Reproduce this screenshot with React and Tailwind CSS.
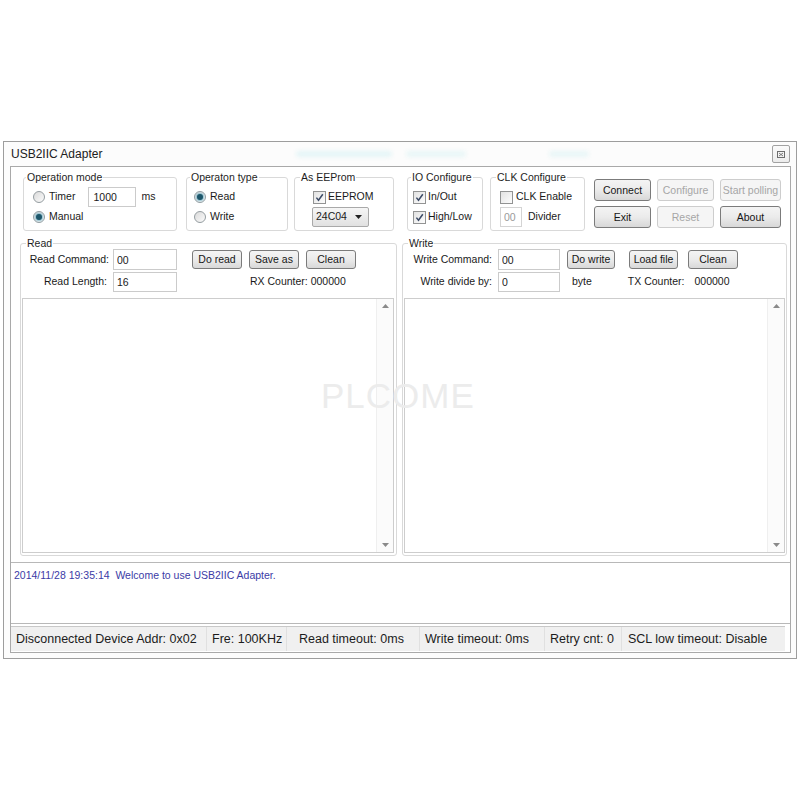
import React from 'react';

// Small Win7-style form controls used across the adapter window
const GroupBox = ({ title, className = '', labelPos = 'left-[3px]', children }) => (
    <div className={`relative border border-[#d9d9d9] rounded-[3px] bg-white ${className}`}>
        <span className={`absolute -top-[7px] ${labelPos} bg-white px-px leading-[12px] text-[#1e1e1e]`}>{title}</span>
        {children}
    </div>
);

const Radio = ({ checked }) => (
    <span className="w-[12px] h-[12px] rounded-full border border-[#959da1] bg-linear-to-br from-[#dadada] to-[#fbfbfb] flex items-center justify-center shrink-0">
        {checked && <span className="w-[6px] h-[6px] rounded-full bg-[#1d566a] shadow-[0_0_2px_1px_#7fb6c8]" />}
    </span>
);

const Check = ({ checked }) => (
    <span className="w-[13px] h-[13px] border border-[#929393] bg-linear-to-br from-[#e2e2e2] to-[#fdfdfd] flex items-center justify-center shrink-0">
        {checked && (
            <svg width="9" height="9" viewBox="0 0 9 9">
                <path d="M1.4 4.6 L3.5 7.2 L7.8 1.2" fill="none" stroke="#3b4a66" strokeWidth="1.5" />
            </svg>
        )}
    </span>
);

const Field = ({ value, className = '' }) => (
    <input
        readOnly
        value={value}
        className={`h-[20px] border border-[#cbcbcb] bg-white pl-[3px] text-[#1a1a1a] outline-none ${className}`}
    />
);

function clsxLite(...parts) {
    return parts.filter(Boolean).join(' ');
}

const Btn = ({ children, disabled, className = '' }) => (
    <button
        type="button"
        className={clsxLite(
            'flex items-center justify-center rounded-[3px] border leading-none',
            disabled
                ? 'border-[#cdcdcd] text-[#a6a6a6] bg-[#f5f5f5]'
                : 'border-[#7b7b7b] text-[#161616] bg-linear-to-b from-[#f4f4f4] via-[#ebebeb] to-[#d8d8d8]',
            className
        )}
    >
        {children}
    </button>
);

const DataBox = ({ className = '' }) => (
    <div className={`flex border border-[#cdcdcd] bg-white ${className}`}>
        <div className="flex-1" />
        <div className="w-[17px] flex flex-col items-center justify-between py-[5px] bg-[#fbfbfb] border-l border-[#efefef]">
            <svg width="7" height="4" viewBox="0 0 7 4"><path d="M0 4 L3.5 0 L7 4 Z" fill="#8a8a8a" /></svg>
            <svg width="7" height="4" viewBox="0 0 7 4"><path d="M0 0 L3.5 4 L7 0 Z" fill="#8a8a8a" /></svg>
        </div>
    </div>
);

const STATUS = [
    { text: 'Disconnected Device Addr: 0x02', cls: 'w-[196px] pl-[5px]' },
    { text: 'Fre: 100KHz', cls: 'w-[80px] pl-[5px]' },
    { text: 'Read timeout: 0ms', cls: 'w-[133px] pl-[12px]' },
    { text: 'Write timeout: 0ms', cls: 'w-[125px] pl-[5px]' },
    { text: 'Retry cnt: 0', cls: 'w-[77px] pl-[5px]' },
    { text: 'SCL low timeout: Disable', cls: 'flex-1 pl-[6px] border-r-0' },
];

export default function App() {
    return (
        <div className="relative w-[800px] h-[800px] bg-white pt-[141px] pl-[3px] font-['Liberation_Sans',Arial,sans-serif] text-[10.5px] text-[#1a1a1a]">
            <div className="w-[794px] h-[518px] border border-[#9d9d9d] bg-[#fcfcfc] flex flex-col pl-[6px] pr-[5px] pb-[5px]">
                {/* Title bar */}
                <div className="h-[24px] flex items-center shrink-0">
                    <span className="text-[12px] text-[#202020] pl-px">USB2IIC Adapter</span>
                    <span className="ml-[194px] w-[96px] h-[6px] rounded-full bg-[#e4f5f7] blur-[2px]" />
                    <span className="ml-[14px] w-[60px] h-[6px] rounded-full bg-[#e8f6f7] blur-[2px]" />
                    <span className="ml-[83px] w-[40px] h-[6px] rounded-full bg-[#e8f6f7] blur-[2px]" />
                    <div className="ml-auto mr-[1px] w-[18px] h-[18px] border border-[#a2a2a2] rounded-[2px] bg-linear-to-b from-[#fbfbfb] to-[#ececec] flex items-center justify-center">
                        <svg width="8" height="7" viewBox="0 0 8 7">
                            <rect x="0.5" y="0.5" width="7" height="6" fill="none" stroke="#6d6d6d" />
                            <path d="M2 2 L6 5 M6 2 L2 5" stroke="#6d6d6d" strokeWidth="0.9" />
                        </svg>
                    </div>
                </div>

                {/* Client area */}
                <div className="flex-1 border border-[#a9a9a9] bg-white flex flex-col">
                    {/* Configuration row */}
                    <div className="flex items-start mt-[10px] pl-[12px]">
                        <GroupBox title="Operation mode" labelPos="left-[2px]" className="w-[154px] h-[54px]">
                            <div className="pt-[12px] pl-[9px]">
                                <div className="h-[14px] flex items-center">
                                    <Radio />
                                    <span className="ml-[4px]">Timer</span>
                                    <Field value="1000" className="ml-[13px] w-[48px] pl-[4px]" />
                                    <span className="ml-[5px]">ms</span>
                                </div>
                                <div className="h-[20px] mt-[3px] flex items-center">
                                    <Radio checked />
                                    <span className="ml-[4px]">Manual</span>
                                </div>
                            </div>
                        </GroupBox>

                        <GroupBox title="Operaton type" className="ml-[9px] w-[102px] h-[54px]">
                            <div className="pt-[12px] pl-[7px]">
                                <div className="h-[14px] flex items-center">
                                    <Radio checked />
                                    <span className="ml-[4px]">Read</span>
                                </div>
                                <div className="h-[20px] mt-[3px] flex items-center">
                                    <Radio />
                                    <span className="ml-[4px]">Write</span>
                                </div>
                            </div>
                        </GroupBox>

                        <GroupBox title="As EEProm" labelPos="left-[5px]" className="ml-[6px] w-[100px] h-[54px]">
                            <div className="pt-[12px] pl-[18px]">
                                <div className="h-[14px] flex items-center">
                                    <Check checked />
                                    <span className="ml-[2px]">EEPROM</span>
                                </div>
                                <div className="h-[20px] mt-[3px] w-[57px] -ml-px border border-[#a9a9a9] rounded-[2px] bg-linear-to-b from-[#f6f6f6] to-[#e1e1e1] flex items-center pl-[3px] pr-[6px]">
                                    <span>24C04</span>
                                    <svg className="ml-auto" width="7" height="4" viewBox="0 0 7 4"><path d="M0 0 L3.5 4 L7 0 Z" fill="#222" /></svg>
                                </div>
                            </div>
                        </GroupBox>

                        <GroupBox title="IO Configure" className="ml-[13px] w-[76px] h-[54px]">
                            <div className="pt-[12px] pl-[5px]">
                                <div className="h-[14px] flex items-center">
                                    <Check checked />
                                    <span className="ml-[2px]">In/Out</span>
                                </div>
                                <div className="h-[20px] mt-[3px] flex items-center">
                                    <Check checked />
                                    <span className="ml-[2px]">High/Low</span>
                                </div>
                            </div>
                        </GroupBox>

                        <GroupBox title="CLK Configure" labelPos="left-[5px]" className="ml-[7px] w-[95px] h-[54px]">
                            <div className="pt-[12px] pl-[9px]">
                                <div className="h-[14px] flex items-center">
                                    <Check />
                                    <span className="ml-[3px]">CLK Enable</span>
                                </div>
                                <div className="h-[20px] mt-[3px] flex items-center">
                                    <Field value="00" className="w-[22px] text-[#9a9a9a] border-[#d4d4d4]" />
                                    <span className="ml-[6px]">Divider</span>
                                </div>
                            </div>
                        </GroupBox>

                        <div className="ml-[9px] mt-[2px] grid grid-cols-[57px_57px_61px] gap-x-[6px] gap-y-[5px]">
                            <Btn className="h-[22px]">Connect</Btn>
                            <Btn disabled className="h-[22px]">Configure</Btn>
                            <Btn disabled className="h-[22px]">Start polling</Btn>
                            <Btn className="h-[22px]">Exit</Btn>
                            <Btn disabled className="h-[22px]">Reset</Btn>
                            <Btn className="h-[22px]">About</Btn>
                        </div>
                    </div>

                    {/* Read / Write panes */}
                    <div className="flex mt-[12px] pl-[9px]">
                        <GroupBox title="Read" labelPos="left-[5px]" className="w-[377px] h-[313px] flex flex-col">
                            <div className="mt-[5px] h-[21px] flex items-center">
                                <span className="w-[88px] text-right">Read Command:</span>
                                <Field value="00" className="ml-[4px] w-[64px] h-[21px]" />
                                <Btn className="ml-[15px] w-[50px] h-[19px]">Do read</Btn>
                                <Btn className="ml-[7px] w-[50px] h-[19px]">Save as</Btn>
                                <Btn className="ml-[7px] w-[50px] h-[19px]">Clean</Btn>
                            </div>
                            <div className="mt-[2px] h-[20px] flex items-center">
                                <span className="w-[86px] text-right">Read Length:</span>
                                <Field value="16" className="ml-[6px] w-[64px]" />
                                <span className="ml-[73px]">RX Counter: 000000</span>
                            </div>
                            <DataBox className="mt-[6px] ml-px mr-[2px] h-[255px]" />
                        </GroupBox>

                        <GroupBox title="Write" labelPos="left-[5px]" className="ml-[5px] w-[385px] h-[313px] flex flex-col">
                            <div className="mt-[5px] h-[21px] flex items-center">
                                <span className="w-[89px] text-right">Write Command:</span>
                                <Field value="00" className="ml-[6px] w-[62px] h-[21px]" />
                                <Btn className="ml-[7px] w-[48px] h-[19px]">Do write</Btn>
                                <Btn className="ml-[14px] w-[49px] h-[19px]">Load file</Btn>
                                <Btn className="ml-[10px] w-[50px] h-[19px]">Clean</Btn>
                            </div>
                            <div className="mt-[2px] h-[20px] flex items-center">
                                <span className="w-[89px] text-right">Write divide by:</span>
                                <Field value="0" className="ml-[6px] w-[62px]" />
                                <span className="ml-[12px]">byte</span>
                                <span className="ml-[36px]">TX Counter:</span>
                                <span className="ml-[10px]">000000</span>
                            </div>
                            <DataBox className="mt-[6px] ml-px mr-px h-[255px]" />
                        </GroupBox>
                    </div>

                    {/* Log */}
                    <div className="mt-[6px] h-[62px] border-y border-[#b8b8b8] bg-white pl-[3px] pt-[5px]">
                        <span className="text-[#3b3ba6] leading-[14px]">2014/11/28 19:35:14&nbsp; Welcome to use USB2IIC Adapter.</span>
                    </div>

                    {/* Status bar */}
                    <div className="mt-[2px] mr-[5px] h-[25px] flex items-stretch bg-[#f0f0f0] border-t border-[#c8c8c8] text-[12.5px] text-[#1c1c1c]">
                        {STATUS.map((s) => (
                            <div key={s.text} className={`flex items-center border-r border-[#e0e0e0] ${s.cls}`}>
                                {s.text}
                            </div>
                        ))}
                    </div>
                </div>
            </div>

            {/* Faint watermark over the window */}
            <span className="absolute left-[321px] top-[378px] text-[35px] leading-none tracking-[1px] text-[#ececec] select-none pointer-events-none">
                PLCOME
            </span>
        </div>
    );
}
